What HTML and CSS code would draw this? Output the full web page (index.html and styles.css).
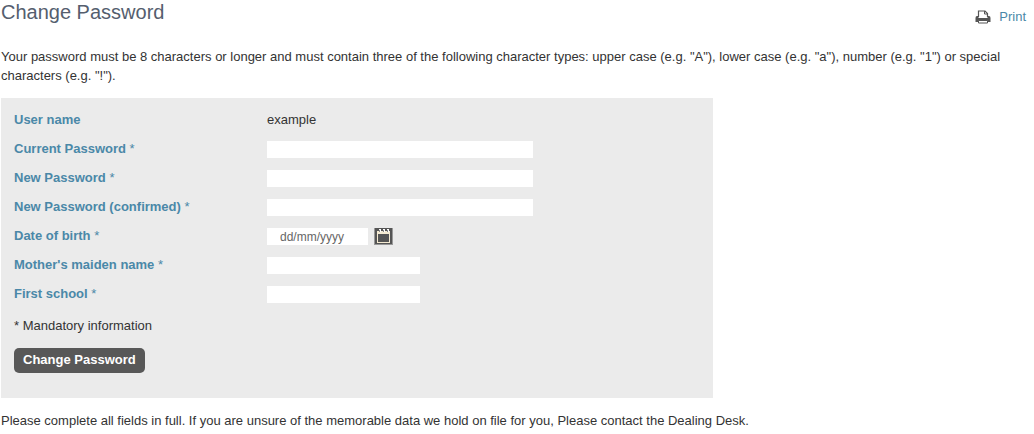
FILE: index.html
```html
<!DOCTYPE html>
<html lang="en">

<head>
    <meta charset="UTF-8">
    <meta name="viewport" content="width=device-width, initial-scale=1.0">
    <title>Change Password</title>
    <link rel="stylesheet" href="styles.css">
</head>

<body>

    <div class="header">
        <h1>Change Password</h1>
        <a class="print" href="#">
            <svg width="16" height="14" viewBox="0 0 16 14" aria-hidden="true">
                <path d="M3.500 7V1h6.500l2.500 2.500V7" fill="#fff" stroke="#555" stroke-width="1.2" />
                <path d="M9.500 1v3h3" fill="none" stroke="#555" />
                <path d="M2 6h1.500v2h9V6H14q1.500 0 1.500 2v4H.500V8Q.500 6 2 6z" fill="#555" />
                <path d="M3.500 10.500h9V13h-9z" fill="#fff" stroke="#555" />
            </svg>
            <span>Print</span>
        </a>
    </div>

    <p class="intro">Your password must be 8 characters or longer and must contain three of the following character types: upper case (e.g. "A"), lower case (e.g. "a"), number (e.g. "1") or special characters (e.g. "!").</p>

    <form class="panel">
        <div class="row">
            <span class="label">User name</span>
            <span class="value">example</span>
        </div>
        <div class="row">
            <label class="label" for="current">Current Password <span class="star">*</span></label>
            <input class="long" type="password" id="current" name="current">
        </div>
        <div class="row">
            <label class="label" for="new">New Password <span class="star">*</span></label>
            <input class="long" type="password" id="new" name="new">
        </div>
        <div class="row">
            <label class="label" for="confirm">New Password (confirmed) <span class="star">*</span></label>
            <input class="long" type="password" id="confirm" name="confirm">
        </div>
        <div class="row">
            <label class="label" for="dob">Date of birth <span class="star">*</span></label>
            <input class="date" type="text" id="dob" name="dob" placeholder="dd/mm/yyyy">
            <button class="calendar" type="button" aria-label="Choose date">
                <svg width="19" height="17" viewBox="0 0 19 17" aria-hidden="true">
                    <path d="M0 0h19v17H0z" fill="#999" />
                    <path d="M1 0h17v16H1z" fill="#555" />
                    <path d="M3 3h13v12H3z" fill="#f4ead2" />
                    <path d="M5 1h2v3H5zM9 1h2v3H9zM13 1h2v3h-2z" fill="#fff" />
                    <path d="M4 6h11v8H4z" fill="#555" />
                    <path d="M5 2h1v2H5zM9 2h1v2H9zM13 2h1v2h-1z" fill="#888" />
                </svg>
            </button>
        </div>
        <div class="row">
            <label class="label" for="maiden">Mother's maiden name <span class="star">*</span></label>
            <input class="short" type="text" id="maiden" name="maiden">
        </div>
        <div class="row">
            <label class="label" for="school">First school <span class="star">*</span></label>
            <input class="short" type="text" id="school" name="school">
        </div>
        <p class="mandatory">* Mandatory information</p>
        <button class="submit" type="submit">Change Password</button>
    </form>

    <p class="note">Please complete all fields in full. If you are unsure of the memorable data we hold on file for you, Please contact the Dealing Desk.</p>

</body>

</html>
```

FILE: styles.css
```css
body {
    font-family: "Liberation Sans", Arial, sans-serif;
    font-size: 13px;
    line-height: 19px;
    margin: 0;
    padding: 0 8px 0 1px;
    background-color: #fff;
    color: #333;
}

p {
    margin: 0;
}

.header {
    display: flex;
    justify-content: space-between;
    align-items: flex-start;
}

h1 {
    margin: 0;
    color: #555e6e;
    font-size: 20px;
    font-weight: normal;
    line-height: 24px;
}

.print {
    display: flex;
    align-items: center;
    gap: 8px;
    padding-top: 7px;
    color: #4a88a8;
    text-decoration: none;
}

.intro {
    margin: 21px 0 13px;
}

.panel {
    max-width: 686px;
    padding: 8px 13px 25px;
    background-color: #ebebeb;
}

.row {
    display: flex;
    align-items: center;
    height: 29px;
}

.label {
    width: 253px;
    padding-bottom: 2px;
    color: #4a88a8;
    font-weight: bold;
}

.star {
    font-weight: normal;
}

.value {
    padding-bottom: 2px;
}

input {
    box-sizing: border-box;
    height: 17px;
    padding: 0 13px;
    border: none;
    background-color: #fff;
    color: #333;
    font-family: inherit;
    font-size: 12px;
}

input::placeholder {
    color: #666;
    opacity: 1;
}

.long {
    width: 266px;
}

.short {
    width: 153px;
}

.date {
    width: 101px;
}

.calendar {
    display: flex;
    margin-left: 6px;
    padding: 0;
    border: none;
    background: none;
    cursor: pointer;
}

.mandatory {
    margin: 7px 0 13px;
}

.submit {
    display: block;
    height: 25px;
    padding: 0 9px 2px;
    border: none;
    border-radius: 5px;
    background-color: #585858;
    color: #fff;
    font-family: inherit;
    font-size: 13px;
    font-weight: bold;
    cursor: pointer;
}

.note {
    margin-top: 13px;
}
```
